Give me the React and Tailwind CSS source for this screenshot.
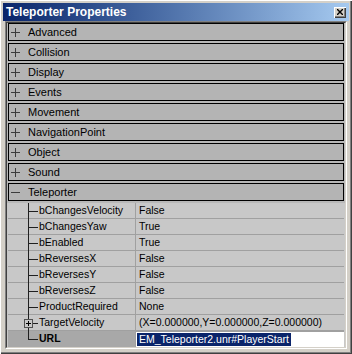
import React from "react";

const categories = [
  "Advanced",
  "Collision",
  "Display",
  "Events",
  "Movement",
  "NavigationPoint",
  "Object",
  "Sound",
];

const props = [
  { name: "bChangesVelocity", value: "False" },
  { name: "bChangesYaw", value: "True" },
  { name: "bEnabled", value: "True" },
  { name: "bReversesX", value: "False" },
  { name: "bReversesY", value: "False" },
  { name: "bReversesZ", value: "False" },
  { name: "ProductRequired", value: "None" },
  { name: "TargetVelocity", value: "(X=0.000000,Y=0.000000,Z=0.000000)", expandable: true },
  { name: "URL", value: "EM_Teleporter2.unr#PlayerStart", last: true },
];

const ExpandGlyph = ({ open }) => (
  <svg width="9" height="9" viewBox="0 0 9 9" className="shrink-0">
    <line x1="0" y1="4.5" x2="9" y2="4.5" stroke="#3c3c3c" strokeWidth="1" />
    {!open && <line x1="4.5" y1="0" x2="4.5" y2="9" stroke="#3c3c3c" strokeWidth="1" />}
  </svg>
);

const TreeGlyph = ({ last, expandable }) => (
  <svg width="16" height="16" viewBox="0 0 16 16" className="shrink-0">
    {expandable ? (
      <>
        <line x1="6.5" y1="0" x2="6.5" y2="4" stroke="#202020" />
        <line x1="6.5" y1="13" x2="6.5" y2="16" stroke="#202020" />
        <rect x="2.5" y="4.5" width="8" height="8" fill="none" stroke="#505050" />
        <line x1="4" y1="8.5" x2="9" y2="8.5" stroke="#000" />
        <line x1="6.5" y1="6" x2="6.5" y2="11" stroke="#000" />
        <line x1="11" y1="8.5" x2="16" y2="8.5" stroke="#202020" />
      </>
    ) : (
      <>
        <line x1="6.5" y1="0" x2="6.5" y2={last ? 9 : 16} stroke="#202020" />
        <line x1="6.5" y1="8.5" x2="16" y2="8.5" stroke="#202020" />
      </>
    )}
  </svg>
);

const CategoryRow = ({ label, open }) => (
  <div className="mx-[1px] mb-[2px] flex h-[18px] items-center border border-black bg-[#b4b4b4] pl-[2px] text-[11px] text-black">
    <ExpandGlyph open={open} />
    <span className="ml-[8px] leading-none">{label}</span>
  </div>
);

const PropRow = ({ name, value, expandable, last }) => (
  <div
    className={`mx-[1px] flex h-[16px] text-[10.5px] text-black ${
      last ? "" : "shadow-[inset_0_-1px_#a0a0a0]"
    }`}
  >
    <div className={`flex w-[127px] items-center ${last ? "bg-[#a8a8a8]" : ""}`}>
      <div className="w-[14px]" />
      <TreeGlyph last={last} expandable={expandable} />
      <span className={`ml-[1px] whitespace-nowrap ${last ? "font-bold" : ""}`}>{name}</span>
    </div>
    {last ? (
      <div className="flex flex-1 items-stretch border-l border-t border-[#a0a0a0] bg-white py-[1px] pl-[1px]">
        <span className="flex items-center whitespace-nowrap bg-[#0a246a] px-[2px] text-white">
          {value}
        </span>
      </div>
    ) : (
      <div className="flex flex-1 items-center border-l border-[#a0a0a0] pl-[3px] whitespace-nowrap">
        {value}
      </div>
    )}
  </div>
);

export default function App() {
  return (
    <div className="h-[354px] w-[352px] bg-[#d4d0c8] p-[3px] font-['Liberation_Sans',Arial,sans-serif] shadow-[inset_1px_1px_#ffffff,inset_-1px_-1px_#404040,inset_-2px_-2px_#808080]">
      <div className="flex h-[18px] items-center bg-gradient-to-r from-[#0a246a] to-[#a6caf0] pl-[3px] pr-[3px]">
        <span className="flex-1 text-[12px] font-bold text-white">Teleporter Properties</span>
        <div className="flex h-[11px] w-[12px] items-center justify-center bg-[#d4d0c8] shadow-[inset_1px_1px_#ffffff,inset_-1px_-1px_#404040,inset_-2px_-2px_#808080]">
          <svg width="6" height="6" viewBox="0 0 6 6">
            <path d="M0 0 L6 6 M6 0 L0 6" stroke="#000" strokeWidth="1.4" />
          </svg>
        </div>
      </div>
      <div className="ml-[2px] h-[328px] w-[342px] border-l border-t border-[#808080] border-b-white border-r-white border-b border-r">
        <div className="h-full w-full border-l border-t border-[#404040] border-b-[#d4d0c8] border-r-[#d4d0c8] border-b border-r bg-[#b8b8b8]">
          {categories.map((c) => (
            <CategoryRow key={c} label={c} />
          ))}
          <CategoryRow label="Teleporter" open />
          <div className="bg-[#c8c8c8]">
            {props.map((p) => (
              <PropRow key={p.name} {...p} />
            ))}
          </div>
        </div>
      </div>
    </div>
  );
}
